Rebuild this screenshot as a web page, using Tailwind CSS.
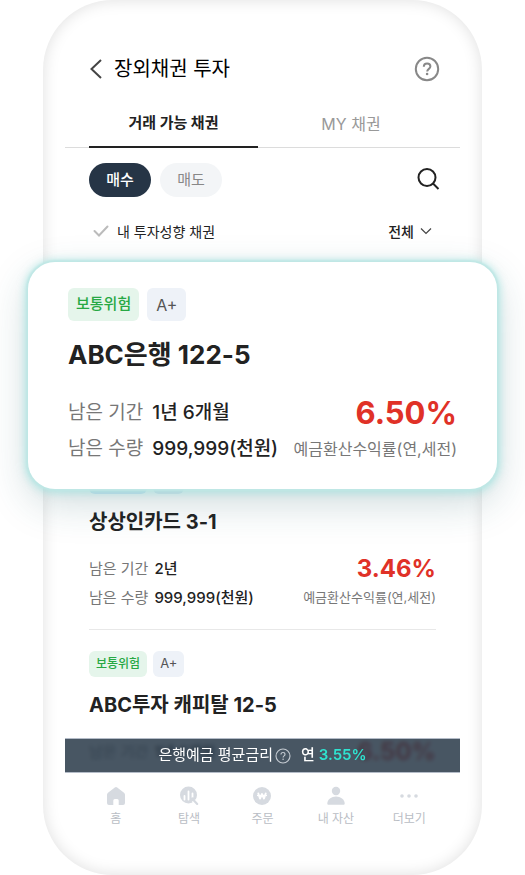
<!DOCTYPE html>
<html lang="ko">
<head>
  <meta charset="UTF-8" />
  <meta name="viewport" content="width=device-width, initial-scale=1.0"/>
  <title>장외채권 투자</title>
  <script src="https://cdn.jsdelivr.net/npm/@tailwindcss/browser@4"></script>
</head>
<body class="bg-white font-['Inter','Noto_Sans_CJK_KR',sans-serif] text-[#222]">
  <div class="mx-[43px] rounded-[70px] bg-white px-[22px] pt-[49px] pb-[46px] shadow-[inset_0_0_16px_rgba(0,0,0,0.13)]">

    <!-- Header -->
    <header class="flex h-10 items-center justify-between pr-5 pl-6">
      <div class="flex items-center gap-3">
        <a href="#" aria-label="뒤로">
          <svg class="h-5 w-[13px]" viewBox="0 0 13 20" fill="none" stroke="#444" stroke-width="2"><path d="M12 1 2.500 10 12 19"/></svg>
        </a>
        <h1 class="text-[20px] leading-7 text-black">장외채권 투자</h1>
      </div>
      <button type="button" aria-label="도움말">
        <svg class="size-[26px]" viewBox="0 0 26 26" fill="none" stroke="#888" stroke-width="2">
          <circle cx="13" cy="13" r="11.200"/>
          <path d="M9.800 10.800c0-2 1.400-3.300 3.300-3.300s3.300 1.200 3.300 3c0 2.300-3.200 2.500-3.200 5"/>
          <circle cx="13.100" cy="18" r="1.300" fill="#888" stroke="none"/>
        </svg>
      </button>
    </header>

    <!-- Tabs -->
    <div role="tablist" class="mt-3 flex h-[47px] pr-4 pl-6 text-[16px] shadow-[inset_0_-1px_0_#dcdcdc]">
      <button type="button" role="tab" aria-selected="true" class="w-[169px] border-b-2 border-[#222] text-[15px] font-bold">거래 가능 채권</button>
      <button type="button" role="tab" aria-selected="false" class="flex-1 border-b-2 border-transparent text-[#999]">MY 채권</button>
    </div>

    <main class="px-6">
      <!-- Buy / sell -->
      <div class="mt-[15px] flex items-center gap-[9px]">
        <button type="button" class="h-[34px] w-[62px] rounded-full bg-[#263546] text-[15px] font-medium text-white">매수</button>
        <button type="button" class="h-[34px] w-[62px] rounded-full bg-[#f3f5f7] text-[15px] text-[#888]">매도</button>
        <button type="button" aria-label="검색" class="-mr-1 ml-auto">
          <svg class="size-6" viewBox="0 0 24 24" fill="none" stroke="#222" stroke-width="2"><circle cx="11" cy="9.500" r="8.500"/><path d="m17 15.500 5.500 5.500"/></svg>
        </button>
      </div>

      <!-- Filter -->
      <div class="mt-[19px] flex h-[30px] items-center justify-between pr-1 pl-1 text-[14px]">
        <label class="flex items-center gap-2">
          <input type="checkbox" class="peer sr-only" />
          <svg class="h-3 w-4" viewBox="0 0 16 12" fill="none" stroke="#bbb" stroke-width="2" stroke-linecap="round"><path d="m1.500 6 4.500 4.500 8.500-9"/></svg>
          내 투자성향 채권
        </label>
        <div class="relative flex items-center">
          <select aria-label="채권 구분" class="field-sizing-content appearance-none bg-transparent pr-[18px] font-medium">
            <option>전체</option>
          </select>
          <svg class="pointer-events-none absolute right-0 h-2 w-3" viewBox="0 0 12 8" fill="none" stroke="#444" stroke-width="1.200"><path d="m1 1.500 5 5 5-5"/></svg>
        </div>
      </div>

      <!-- Featured bond -->
      <article class="relative z-10 -mx-[61px] mt-4 rounded-[27px] bg-white px-10 pt-[26px] pb-[22px] shadow-[0_0_2px_2px_#bfe7e5,0_1px_7px_4px_rgba(150,225,222,0.5),0_14px_40px_rgba(30,90,100,0.22)]">
        <div class="flex gap-2 text-[15px]">
          <span class="flex h-[33px] items-center rounded-md bg-[#e5f5eb] px-2 font-medium text-[#27a844]">보통위험</span>
          <span class="flex h-[33px] items-center rounded-md bg-[#eef2f8] px-[9px] text-[16px] text-[#555]">A+</span>
        </div>
        <h2 class="mt-4 text-[26px] leading-9 font-bold">ABC은행 122-5</h2>
        <div class="mt-[22px] flex justify-between whitespace-nowrap">
          <dl class="grid grid-cols-[auto_auto] gap-x-[9px] text-[19px] leading-9">
            <dt class="text-[#777]">남은 기간</dt>
            <dd class="font-medium">1년 6개월</dd>
            <dt class="text-[#777]">남은 수량</dt>
            <dd class="font-medium">999,999(천원)</dd>
          </dl>
          <div class="text-right">
            <p class="text-[31px] leading-9 font-bold text-[#e03127]">6.50%</p>
            <p class="text-[16px] leading-9 text-[#777]">예금환산수익률(연,세전)</p>
          </div>
        </div>
      </article>

      <!-- Bond list -->
      <article class="-mt-[21px] border-b border-[#e8e8e8] pb-[17px]">
        <div class="flex gap-[6px] text-[12px]">
          <span class="flex h-[26px] items-center rounded-md bg-[#d8ecfa] px-[7px] font-medium text-[#2b7fd0]">낮은위험</span>
          <span class="flex h-[26px] items-center rounded-md bg-[#e4eef6] px-[7px] text-[13px] text-[#555]">A+</span>
        </div>
        <h2 class="mt-[14px] text-[20px] leading-7 font-bold">상상인카드 3-1</h2>
        <div class="mt-[18px] flex justify-between whitespace-nowrap">
          <dl class="grid grid-cols-[auto_auto] gap-x-[6px] text-[15px] leading-[29px]">
            <dt class="text-[#777]">남은 기간</dt>
            <dd class="font-medium">2년</dd>
            <dt class="text-[#777]">남은 수량</dt>
            <dd class="font-medium">999,999(천원)</dd>
          </dl>
          <div class="text-right">
            <p class="text-[24px] leading-[29px] font-bold text-[#e03127]">3.46%</p>
            <p class="text-[13px] leading-[29px] text-[#777]">예금환산수익률(연,세전)</p>
          </div>
        </div>
      </article>
      <article class="pt-[21px]">
        <div class="flex gap-[6px] text-[12px]">
          <span class="flex h-[26px] items-center rounded-md bg-[#e5f5eb] px-[7px] font-medium text-[#27a844]">보통위험</span>
          <span class="flex h-[26px] items-center rounded-md bg-[#eef2f8] px-[7px] text-[13px] text-[#555]">A+</span>
        </div>
        <h2 class="mt-[14px] text-[20px] leading-7 font-bold">ABC투자 캐피탈 12-5</h2>
        <div class="mt-[18px] flex justify-between whitespace-nowrap">
          <dl class="flex gap-[6px] text-[15px] leading-[29px]">
            <dt class="text-[#777]">남은 기간</dt>
            <dd class="font-medium">1년 6개월</dd>
          </dl>
          <p class="text-[24px] leading-[29px] font-bold text-[#e03127]">6.50%</p>
        </div>
      </article>
    </main>

    <!-- Average deposit rate -->
    <div class="relative -mt-[28px] flex h-[35px] items-center justify-center border-y border-[#b4bcc8] bg-[#283848]/85 text-[15px] text-white backdrop-blur-[2px]">
      은행예금 평균금리
      <svg class="ml-[2px] size-4" viewBox="0 0 16 16" fill="none" stroke="#c5cbd2" stroke-width="1.100">
        <circle cx="8" cy="8" r="7"/>
        <path d="M6 6.500c0-1.200.9-2 2-2s2 .8 2 1.900c0 1.500-1.900 1.500-1.900 3"/>
        <circle cx="8.100" cy="11.300" r=".8" fill="#c5cbd2" stroke="none"/>
      </svg>
      <span class="ml-[10px] font-medium">연</span>
      <strong class="ml-1 font-semibold text-[#2fe3d0]">3.55%</strong>
    </div>

    <!-- Bottom navigation -->
    <nav class="grid grid-cols-5 px-[14px] pt-[11px] text-[12px] leading-5 text-[#b9bdc4]">
      <a href="#" class="flex flex-col items-center gap-[1px]">
        <svg class="size-6" viewBox="0 0 24 24" fill="#d6dae0"><path d="M10.800 3.400a2 2 0 0 1 2.400 0l6.800 5.300a2.500 2.500 0 0 1 1 2V19a2 2 0 0 1-2 2h-4.300v-4.500a1.500 1.500 0 0 0-1.500-1.500h-2.400a1.500 1.500 0 0 0-1.500 1.500V21H5a2 2 0 0 1-2-2v-8.300a2.500 2.500 0 0 1 1-2z"/></svg>
        홈
      </a>
      <a href="#" class="flex flex-col items-center gap-[1px]">
        <svg class="size-6" viewBox="0 0 24 24">
          <circle cx="11.500" cy="11" r="8.500" fill="#d6dae0"/>
          <path d="M7.500 12v3.500M11.500 7.500v8M15.500 9.500v4" stroke="#fff" stroke-width="1.800" stroke-linecap="round"/>
          <path d="m16.300 16.300 4 4" stroke="#fff" stroke-width="4"/>
          <circle cx="15.800" cy="15.200" r="2" fill="#d6dae0"/>
          <path d="m16 15.500 4.200 4.400" stroke="#d6dae0" stroke-width="2.200" stroke-linecap="round"/>
        </svg>
        탐색
      </a>
      <a href="#" class="flex flex-col items-center gap-[1px]">
        <svg class="size-6" viewBox="0 0 24 24" fill="none">
          <circle cx="12" cy="12" r="9" fill="#d6dae0"/>
          <path d="m8.300 9.500 1.700 5 2-4.500 2 4.500 1.700-5" stroke="#fff" stroke-width="1.900" stroke-linecap="round" stroke-linejoin="round"/>
          <path d="M7 11.500h10" stroke="#fff" stroke-width="1.200"/>
        </svg>
        주문
      </a>
      <a href="#" class="flex flex-col items-center gap-[1px]">
        <svg class="size-6" viewBox="0 0 24 24" fill="#d6dae0"><circle cx="12" cy="7" r="4.200"/><path d="M3.300 19.500C3.300 15.500 7.500 12.500 12 12.500s8.700 3 8.700 7c0 .8-.5 1.300-1.300 1.300H4.600c-.8 0-1.300-.5-1.300-1.300z"/></svg>
        내 자산
      </a>
      <a href="#" class="flex flex-col items-center gap-[1px]">
        <svg class="size-6" viewBox="0 0 24 24" fill="#d6dae0"><circle cx="5" cy="12" r="1.800"/><circle cx="12" cy="12" r="1.800"/><circle cx="19" cy="12" r="1.800"/></svg>
        더보기
      </a>
    </nav>
  </div>
</body>
</html>
